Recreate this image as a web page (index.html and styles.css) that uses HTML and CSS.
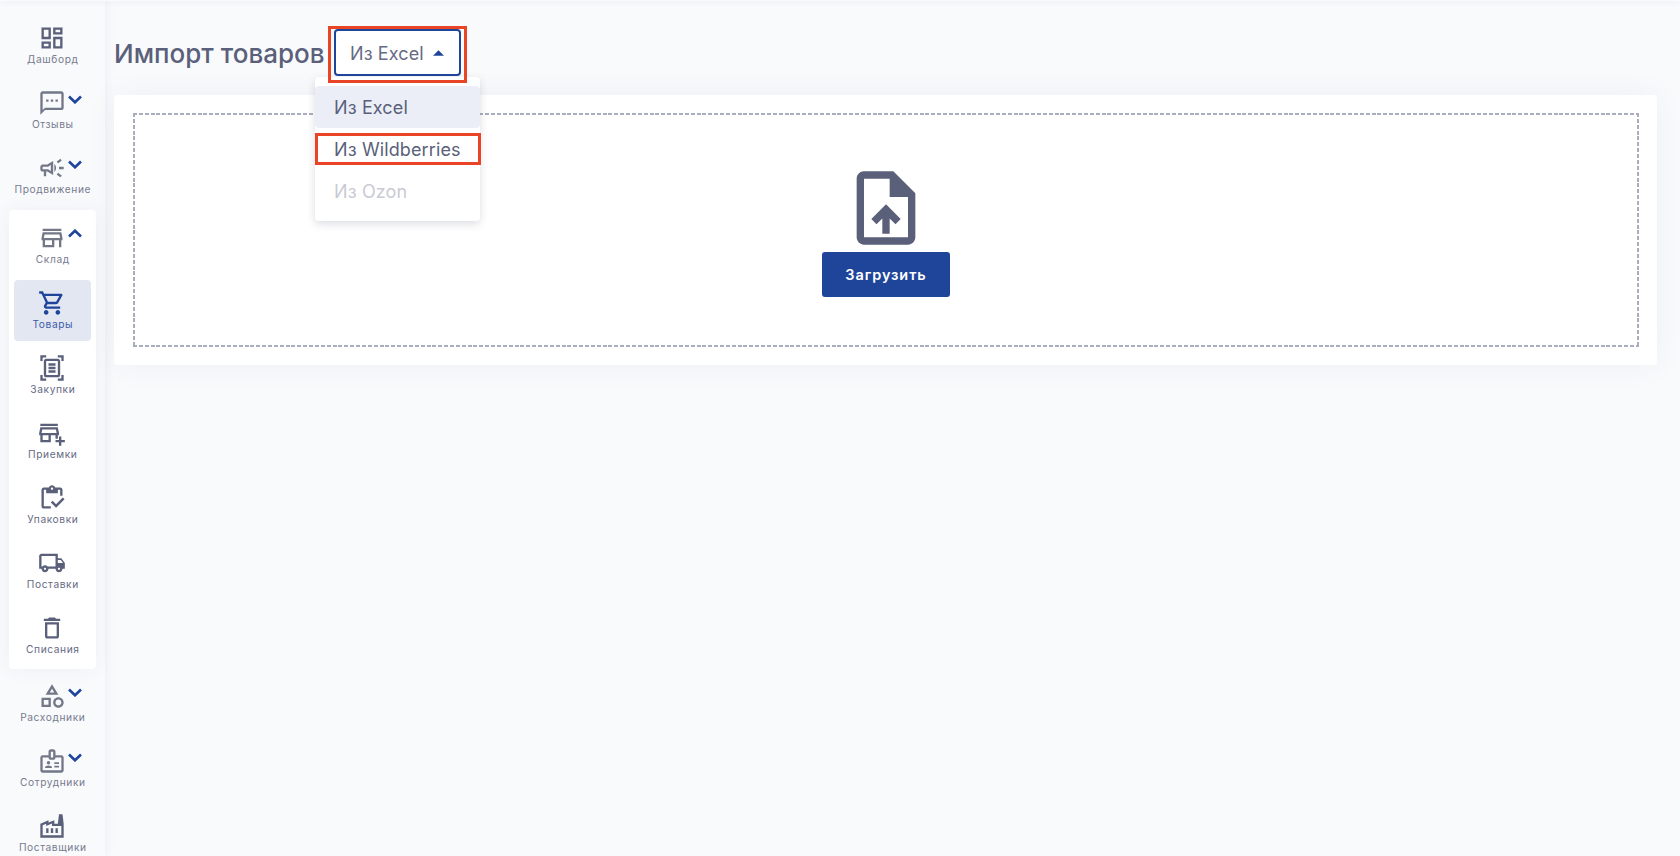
FILE: index.html
```
<!DOCTYPE html>
<html lang="ru">
<head>
    <meta charset="UTF-8">
    <meta name="viewport" content="width=device-width, initial-scale=1.0">
    <title>Импорт товаров</title>
    <link rel="stylesheet" href="styles.css">
</head>
<body>
    <header class="topbar"></header>
    <div class="layout">
        <!-- Sidebar -->
        <nav class="sidebar">
            <a class="nav-item">
                <svg class="icon" viewBox="0 0 24 24"><path d="M19 5v2h-4V5h4M9 5v6H5V5h4m10 8v6h-4v-6h4M9 17v2H5v-2h4M21 3h-8v6h8V3zM11 3H3v10h8V3zm10 8h-8v10h8V11zm-10 4H3v6h8v-6z"/></svg>
                <span>Дашборд</span>
            </a>
            <a class="nav-item parent">
                <svg class="icon" viewBox="0 0 24 24"><path d="M20 2H4c-1.1 0-2 .9-2 2v18l4-4h14c1.1 0 2-.9 2-2V4c0-1.1-.9-2-2-2zm0 14H6l-2 2V4h16v12zM7 9h2v2H7V9zm8 0h2v2h-2zm-4 0h2v2h-2z"/></svg>
                <svg class="chevron" viewBox="0 0 14 9"><path d="M1 1.5L7 7.300l6-5.800"/></svg>
                <span>Отзывы</span>
            </a>
            <a class="nav-item parent">
                <svg class="icon" viewBox="0 0 24 24"><path d="M18 11v2h4v-2h-4zM16 17.610c.96.71 2.210 1.650 3.200 2.390.4-.53.8-1.070 1.200-1.600-.99-.74-2.240-1.680-3.200-2.400-.4.54-.8 1.080-1.200 1.610zM20.400 5.600c-.4-.53-.8-1.070-1.200-1.600-.99.74-2.240 1.680-3.200 2.400.4.53.8 1.070 1.200 1.600.96-.72 2.210-1.650 3.200-2.400zM4 9c-1.100 0-2 .9-2 2v2c0 1.100.9 2 2 2h1v4h2v-4h1l5 3V6L8 9H4zm5.030 1.710L11 9.530v4.940l-1.970-1.180-.48-.29H4v-2h4.550l.48-.29zM15.500 12c0-1.330-.58-2.530-1.500-3.350v6.690c.92-.81 1.500-2.010 1.500-3.340z"/></svg>
                <svg class="chevron" viewBox="0 0 14 9"><path d="M1 1.5L7 7.300l6-5.800"/></svg>
                <span>Продвижение</span>
            </a>

            <!-- Opened group -->
            <div class="nav-group">
                <a class="nav-item parent">
                    <svg class="icon" viewBox="0 0 24 24"><path d="M18.360 9l.6 3H5.040l.6-3h12.720M20 4H4v2h16V4zm0 3H4l-1 5v2h1v6h10v-6h4v6h2v-6h1v-2l-1-5zM6 18v-4h6v4H6z"/></svg>
                    <svg class="chevron" viewBox="0 0 14 9"><path d="M1 7.500L7 1.700l6 5.800"/></svg>
                    <span>Склад</span>
                </a>
                <a class="nav-item active">
                    <svg class="icon" viewBox="0 0 24 24"><path d="M15.550 13c.75 0 1.410-.41 1.750-1.030l3.580-6.490A.996.996 0 0 0 20.010 4H5.210l-.94-2H1v2h2l3.600 7.590-1.350 2.440C4.520 15.370 5.480 17 7 17h12v-2H7l1.100-2h7.450zM6.160 6h12.150l-2.760 5H8.530L6.160 6zM7 18c-1.100 0-1.990.9-1.990 2S5.900 22 7 22s2-.9 2-2-.9-2-2-2zm10 0c-1.100 0-1.990.9-1.990 2s.89 2 1.990 2 2-.9 2-2-.9-2-2-2z"/></svg>
                    <span>Товары</span>
                </a>
                <a class="nav-item child">
                    <svg class="icon" viewBox="0 0 24 24"><path d="M7 3H4v3H2V1h5v2zm15 3V1h-5v2h3v3h2zM7 21H4v-3H2v5h5v-2zm13-3v3h-3v2h5v-5h-2zM19 18c0 1.100-.9 2-2 2H7c-1.100 0-2-.9-2-2V6c0-1.100.9-2 2-2h10c1.100 0 2 .9 2 2v12zM17 6H7v12h10V6zm-2 2H9v2h6V8zm0 3H9v2h6v-2zm0 3H9v2h6v-2z"/></svg>
                    <span>Закупки</span>
                </a>
                <a class="nav-item child">
                    <svg class="icon" viewBox="0 0 24 24"><path d="M15 17h2v-3h1v-2l-1-5H2l-1 5v2h1v6h9v-6h4v3zm-6 1H4v-4h5v4zm-5.960-6l.6-3h11.720l.6 3H3.040zM2 4h15v2H2zM20 18v-3h-2v3h-3v2h3v3h2v-3h3v-2z"/></svg>
                    <span>Приемки</span>
                </a>
                <a class="nav-item child">
                    <svg class="icon" viewBox="0 0 24 24"><path d="M5 5h2v3h10V5h2v5h2V5c0-1.100-.9-2-2-2h-4.180C14.400 1.840 13.300 1 12 1s-2.400.84-2.820 2H5c-1.100 0-2 .9-2 2v14c0 1.100.9 2 2 2h6v-2H5V5zm7-2c.55 0 1 .45 1 1s-.45 1-1 1-1-.45-1-1 .45-1 1-1zM21.250 11.500l-5.740 5.750-3.010-3L11 15.750l4.510 4.500L22.750 13z"/></svg>
                    <span>Упаковки</span>
                </a>
                <a class="nav-item child">
                    <svg class="icon" viewBox="0 0 24 24"><path d="M20 8h-3V4H3c-1.100 0-2 .9-2 2v11h2c0 1.660 1.340 3 3 3s3-1.340 3-3h6c0 1.660 1.340 3 3 3s3-1.340 3-3h2v-5l-3-4zm-.5 1.500l1.960 2.500H17V9.500h2.500zM6 18c-.55 0-1-.45-1-1s.45-1 1-1 1 .45 1 1-.45 1-1 1zm2.220-3c-.55-.61-1.330-1-2.220-1s-1.670.39-2.220 1H3V6h12v9H8.220zM18 18c-.55 0-1-.45-1-1s.45-1 1-1 1 .45 1 1-.45 1-1 1z"/></svg>
                    <span>Поставки</span>
                </a>
                <a class="nav-item child">
                    <svg class="icon" viewBox="0 0 24 24"><path d="M16 9v10H8V9h8m-1.500-6h-5l-1 1H5v2h14V4h-3.500l-1-1zM18 7H6v12c0 1.100.9 2 2 2h8c1.100 0 2-.9 2-2V7z"/></svg>
                    <span>Списания</span>
                </a>
            </div>

            <a class="nav-item parent">
                <svg class="icon" viewBox="0 0 24 24"><path d="M12 2l-5.500 9h11L12 2zm0 3.840L13.930 9h-3.870L12 5.840zM17.500 13c-2.490 0-4.500 2.010-4.500 4.500s2.010 4.500 4.500 4.500 4.500-2.010 4.500-4.500-2.010-4.500-4.500-4.500zm0 7c-1.380 0-2.500-1.120-2.500-2.500s1.120-2.500 2.500-2.500 2.500 1.120 2.500 2.500-1.120 2.500-2.500 2.500zM3 21.500h8v-8H3v8zm2-6h4v4H5v-4z"/></svg>
                <svg class="chevron" viewBox="0 0 14 9"><path d="M1 1.5L7 7.300l6-5.800"/></svg>
                <span>Расходники</span>
            </a>
            <a class="nav-item parent">
                <svg class="icon" viewBox="0 0 24 24"><path d="M20 7h-5V4c0-1.100-.9-2-2-2h-2c-1.100 0-2 .9-2 2v3H4c-1.100 0-2 .9-2 2v11c0 1.100.9 2 2 2h16c1.100 0 2-.9 2-2V9c0-1.100-.9-2-2-2zm-9-3h2v5h-2V4zm9 16H4V9h5c0 1.100.9 2 2 2h2c1.100 0 2-.9 2-2h5v11z"/><circle cx="9" cy="13.500" r="1.500"/><path d="M11.080 16.180C10.440 15.900 9.740 15.750 9 15.750s-1.440.15-2.080.43C6.360 16.420 6 16.960 6 17.570V18h6v-.43c0-.61-.36-1.150-.92-1.390zM14 13h4v1.500h-4zM14 16h4v1.500h-4z"/></svg>
                <svg class="chevron" viewBox="0 0 14 9"><path d="M1 1.5L7 7.300l6-5.800"/></svg>
                <span>Сотрудники</span>
            </a>
            <a class="nav-item">
                <svg class="icon" viewBox="0 0 24 24"><path d="M22 22H2V10l7-3v2l5-2v3h3l1-8h3l1 8v12zM12 9.950l-5 2V10l-3 1.320V20h16v-8h-8V9.950zM11 18h2v-4h-2v4zm-4 0h2v-4H7v4zm10-4h-2v4h2v-4z"/></svg>
                <span>Поставщики</span>
            </a>
        </nav>

        <!-- Import page -->
        <main class="content">
            <div class="page-head">
                <h1>Импорт товаров</h1>
                <div class="select">
                    <button class="select-btn">
                        <span>Из Excel</span>
                        <svg class="caret" viewBox="0 0 12 6"><path d="M0 6l6-6 6 6z"/></svg>
                    </button>
                    <ul class="menu">
                        <li class="selected">Из Excel</li>
                        <li class="marked">Из Wildberries</li>
                        <li class="disabled">Из Ozon</li>
                    </ul>
                    <div class="mark"></div>
                </div>
            </div>
            <section class="card">
                <div class="dropzone">
                    <svg class="upload-icon" viewBox="0 0 24 24"><path d="M14 2H6c-1.100 0-2 .9-2 2v16c0 1.100.89 2 1.990 2H18c1.100 0 2-.9 2-2V8l-6-6zm4 18H6V4h7v5h5v11zM8 15.010l1.410 1.410L11 14.840V19h2v-4.160l1.590 1.590L16 15.010 12.010 11 8 15.010z"/></svg>
                    <button class="upload-btn">Загрузить</button>
                </div>
            </section>
        </main>
    </div>
</body>
</html>
```
FILE: styles.css
```
* {
    box-sizing: border-box;
}
body {
    margin: 0;
    height: 856px;
    overflow: hidden;
    font-family: Inter, "Liberation Sans", sans-serif;
    background: #f9fafc;
    color: #5a5f7a;
}
.topbar {
    position: relative;
    z-index: 2;
    height: 1px;
    background: #f9fafc;
    box-shadow: 0 1px 5px rgba(60, 70, 100, 0.2);
}
.layout {
    display: flex;
    height: 855px;
}
/* Sidebar */
.sidebar {
    flex: none;
    display: flex;
    flex-direction: column;
    gap: 4px;
    width: 105px;
    padding: 14px 9px 0;
    box-shadow: 0 0 10px rgba(60, 70, 100, 0.08);
}
.nav-item {
    position: relative;
    flex: none;
    display: flex;
    flex-direction: column;
    align-items: center;
    height: 61px;
    padding-top: 9px;
    font-size: 10.2px;
    line-height: 15px;
    letter-spacing: 0.6px;
    white-space: nowrap;
    color: #777b8e;
}
.nav-item span {
    margin-right: -0.6px;
}
.icon {
    width: 28px;
    height: 28px;
    margin-right: 1px;
    fill: #5a5f7a;
}
.parent .icon {
    fill: #737889;
}
.chevron {
    position: absolute;
    top: 15px;
    left: 58.5px;
    width: 14px;
    height: 9px;
    fill: none;
    stroke: #1f459b;
    stroke-width: 2.6;
}
.nav-group {
    display: flex;
    flex-direction: column;
    gap: 4px;
    padding: 5px 5px 3px;
    border-radius: 4px;
    background: #fff;
    box-shadow: 0 0 20px rgba(60, 70, 100, 0.06);
}
.nav-group .chevron {
    left: 53.5px;
    top: 14px;
}
.child {
    color: #666a83;
}
.active {
    border-radius: 4px;
    background: #e3e7f2;
    color: #3b5ba7;
}
.active .icon {
    fill: #1f459b;
}
/* Page */
.content {
    flex: 1;
    padding: 28px 23px 0 9px;
}
.page-head {
    display: flex;
    align-items: center;
    gap: 10px;
    height: 47px;
}
h1 {
    margin: 0;
    padding-top: 2px;
    width: 210px;
    font-size: 26px;
    font-weight: 500;
    white-space: nowrap;
}
.select {
    position: relative;
    z-index: 1;
}
.select-btn {
    display: flex;
    align-items: center;
    justify-content: space-between;
    width: 127px;
    height: 47px;
    padding: 2px 15px 0 14px;
    border: 2px solid #1f459b;
    border-radius: 4px;
    background: #fff;
    font: 400 18px Inter, sans-serif;
    letter-spacing: 0.1px;
    color: #666b83;
}
.caret {
    width: 11px;
    height: 6px;
    margin-bottom: 2px;
    fill: #1f459b;
}
.menu {
    position: absolute;
    top: 48px;
    left: -19px;
    width: 165px;
    height: 144px;
    margin: 0;
    padding: 9px 0;
    list-style: none;
    border-radius: 4px;
    background: #fff;
    box-shadow: 0 3px 8px rgba(60, 70, 100, 0.18);
}
.menu li {
    height: 42px;
    padding-left: 19px;
    font-size: 18px;
    line-height: 44px;
    letter-spacing: 0.12px;
    white-space: nowrap;
}
.menu .selected {
    border-radius: 4px;
    background: #ebeef6;
}
.menu .disabled {
    color: #c9cad3;
}
.marked {
    position: relative;
}
.marked::after {
    content: "";
    position: absolute;
    inset: 5px -1px 5px 0;
    border: 3px solid #ea4427;
}
.mark {
    position: absolute;
    inset: -3px -6px -7px -6px;
    border: 3px solid #ea4427;
    pointer-events: none;
}
.card {
    height: 270px;
    margin-top: 19px;
    padding: 18px 18px 18px 19px;
    border-radius: 4px;
    background: #fff;
    box-shadow: 0 0 30px rgba(60, 70, 100, 0.06);
}
/* short dashes, 4px on and 2px off */
.dropzone {
    --dash: #a9adbe 0 4px, transparent 4px 5.87px;
    display: flex;
    flex-direction: column;
    align-items: center;
    justify-content: center;
    height: 234px;
    padding-top: 1px;
    background:
        repeating-linear-gradient(90deg, var(--dash)) top / 100% 2px no-repeat,
        repeating-linear-gradient(90deg, var(--dash)) bottom / 100% 2px no-repeat,
        repeating-linear-gradient(180deg, var(--dash)) left / 2px 100% no-repeat,
        repeating-linear-gradient(180deg, var(--dash)) right / 2px 100% no-repeat;
}
.upload-icon {
    width: 88px;
    height: 88px;
    fill: #5a5f7a;
}
.upload-btn {
    width: 128px;
    height: 45px;
    padding: 0;
    border: none;
    border-radius: 3px;
    background: #1f459b;
    color: #fff;
    font: 600 14.5px Inter, sans-serif;
    letter-spacing: 0.9px;
}
```
